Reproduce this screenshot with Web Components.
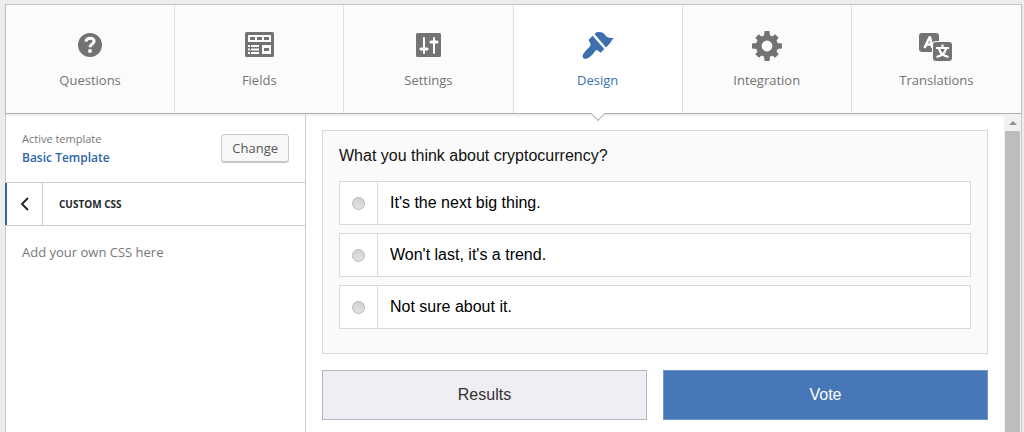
<!DOCTYPE html>
<html lang="en">
<head>
<meta charset="utf-8">
<meta name="viewport" content="width=device-width, initial-scale=1">
<title>Poll editor</title>
<style>
    body {
        margin: 0;
        background: #ededf0;
        font-family: "Open Sans", "Noto Sans", sans-serif;
        font-size: 13px;
        color: #777;
    }
</style>
</head>
<body>
<poll-editor>
    <editor-tab slot="tabs" icon="questions">Questions</editor-tab>
    <editor-tab slot="tabs" icon="fields">Fields</editor-tab>
    <editor-tab slot="tabs" icon="settings">Settings</editor-tab>
    <editor-tab slot="tabs" icon="design" active>Design</editor-tab>
    <editor-tab slot="tabs" icon="integration">Integration</editor-tab>
    <editor-tab slot="tabs" icon="translations">Translations</editor-tab>

    <design-sidebar slot="sidebar" template="Basic Template" section="Custom CSS">Add your own CSS here</design-sidebar>

    <poll-preview slot="preview" question="What you think about cryptocurrency?">
        <poll-option>It's the next big thing.</poll-option>
        <poll-option>Won't last, it's a trend.</poll-option>
        <poll-option>Not sure about it.</poll-option>
    </poll-preview>
</poll-editor>

<script>
// Tab icons, all on a 32x32 grid
const icons = {
    questions: `
        <circle cx="16" cy="16" r="12" fill="currentColor"/>
        <path d="M12 12.600c.3-4.600 8.200-4.400 8.100-.4 0 2.900-4 2.700-4 6" fill="none" stroke="#fff" stroke-width="3"/>
        <circle cx="16" cy="22" r="2" fill="#fff"/>`,
    fields: `
        <rect x="2" y="3" width="29" height="25" rx="1.500" fill="currentColor"/>
        <path fill="#fff" d="M5 6h23v7H5zM19 16h9v9h-9zM5 16h2v2H5zM8 16h8v2H8zM5 19.500h2v2H5zM8 19.500h8v2H8zM5 23h2v2H5zM8 23h8v2H8z"/>
        <path fill="currentColor" d="M7 8h5v3H7zM14 8h5v3h-5zM21 8h5v3h-5zM21 19h5v3h-5z"/>`,
    settings: `
        <rect x="4" y="4" width="25" height="24" rx="1.500" fill="currentColor"/>
        <path d="M12 9v15M22 9v15" stroke="#fff" stroke-width="2" stroke-linecap="round"/>
        <path d="M9 20h6M19 13h6" stroke="#fff" stroke-width="3" stroke-linecap="round"/>`,
    design: `
        <path fill="currentColor" d="M12.500 5C14 3.200 15.500 3 17 3c3.500 0 5 1.500 7 4 1.800 2.200 5 1.800 8 2.300-2 1.200-2.700 3.400-4 5-1.200 1.500-2.500 2.700-4 4.200z"/>
        <path fill="currentColor" d="M10.500 6.800L22.300 20l-3.800 3.800-3.200-2.800c-1.300 0-2 .9-3 2.300-2 2.800-4.500 5-7.300 6.300-3 1.200-5.300-1-4-4C2.500 22.500 5 20.500 7.500 18c1-1.200 1.400-2.500.8-3.800L6.500 11z"/>`,
    integration: `
        <g fill="currentColor">
            <path d="M13.500 2h5l.5 5h-6zM13.500 32h5l.5-5h-6z"/>
            <path d="M13.500 3h5l.5 5h-6zM13.500 31h5l.5-5h-6z" transform="rotate(45 16 17)"/>
            <path d="M13.500 2h5l.5 5h-6zM13.500 32h5l.5-5h-6z" transform="rotate(90 16 17)"/>
            <path d="M13.500 3h5l.5 5h-6zM13.500 31h5l.5-5h-6z" transform="rotate(135 16 17)"/>
        </g>
        <circle cx="16" cy="17" r="8.200" fill="#fff" stroke="currentColor" stroke-width="5.600"/>`,
    translations: `
        <rect x="-1" y="4" width="20" height="19" rx="3" fill="currentColor"/>
        <path d="M4.500 19L9.500 8.500h.5l2.500 10.500M6.500 15.500h6" fill="none" stroke="#fff" stroke-width="2.600"/>
        <rect x="12" y="12" width="20" height="20" rx="4" fill="#fbfbfb"/>
        <rect x="13" y="13" width="19" height="19" rx="3" fill="currentColor"/>
        <path d="M16 19h13M22.500 15.500V19M19 19.500c.8 4 4.500 7.500 9.500 8.500M26 19.500c-.8 4-4.500 7.500-9.500 8.500" fill="none" stroke="#fff" stroke-width="2.200"/>`
};

class PollEditor extends HTMLElement {
    constructor() {
        super();
        this.attachShadow({ mode: 'open' });
        this.shadowRoot.innerHTML = `
            <style>
                :host {
                    display: flex;
                    flex-direction: column;
                    box-sizing: border-box;
                    min-height: calc(100vh - 4px);
                    margin: 4px 2px 0 5px;
                    border: 1px solid #c8c8cc;
                    border-bottom: 0;
                    background: #fff;
                }
                .tabs {
                    display: grid;
                    grid-auto-flow: column;
                    grid-auto-columns: 1fr;
                    border-bottom: 1px solid #b0b0b0;
                    box-shadow: 0 1px 3px rgba(0, 0, 0, .12);
                }
                .body {
                    flex: 1;
                    display: grid;
                    grid-template-columns: 300px 1fr;
                }
            </style>
            <nav class="tabs"><slot name="tabs"></slot></nav>
            <div class="body">
                <slot name="sidebar"></slot>
                <slot name="preview"></slot>
            </div>
        `;
    }
}

class EditorTab extends HTMLElement {
    constructor() {
        super();
        this.attachShadow({ mode: 'open' });
    }

    connectedCallback() {
        this.shadowRoot.innerHTML = `
            <style>
                :host {
                    display: block;
                    position: relative;
                    border-right: 1px solid #e0e0e0;
                    background: #fbfbfb;
                    color: #737373;
                }
                :host(:last-of-type) {
                    border-right: 0;
                }
                :host([active]) {
                    background: #fff;
                    color: #3b6fae;
                }
                button {
                    display: flex;
                    flex-direction: column;
                    align-items: center;
                    gap: 8px;
                    width: 100%;
                    padding: 24px 0 22px;
                    border: 0;
                    background: none;
                    font: inherit;
                    line-height: 22px;
                    color: inherit;
                    cursor: pointer;
                }
                svg {
                    width: 32px;
                    height: 32px;
                    overflow: visible;
                }
                /* Pointer under the current tab */
                :host([active])::after {
                    content: "";
                    position: absolute;
                    left: 50%;
                    bottom: -6px;
                    width: 9px;
                    height: 9px;
                    margin-left: -5px;
                    border: solid #b0b0b0;
                    border-width: 0 1px 1px 0;
                    background: #fff;
                    transform: rotate(45deg);
                }
            </style>
            <button type="button">
                <svg viewBox="0 0 32 32" aria-hidden="true">${icons[this.getAttribute('icon')] || ''}</svg>
                <span><slot></slot></span>
            </button>
        `;
    }
}

class DesignSidebar extends HTMLElement {
    constructor() {
        super();
        this.attachShadow({ mode: 'open' });
        this.shadowRoot.innerHTML = `
            <style>
                :host {
                    display: block;
                    box-sizing: border-box;
                    border-right: 1px solid #ccc;
                }
                .template {
                    display: flex;
                    align-items: center;
                    justify-content: space-between;
                    padding: 15px 16px;
                }
                .template__label {
                    font-size: 11px;
                    line-height: 20px;
                }
                .template__name {
                    display: block;
                    font-size: 12px;
                    font-weight: 600;
                    line-height: 18px;
                    color: #2b66a5;
                }
                .template__change {
                    height: 28px;
                    padding: 0 10px;
                    border: 1px solid #c8c8c8;
                    border-radius: 3px;
                    background: #f8f8f8;
                    box-shadow: 0 1px 0 #ccc;
                    font: inherit;
                    color: #555;
                }
                .section {
                    display: flex;
                    align-items: stretch;
                    height: 42px;
                    border: solid #ccc;
                    border-width: 1px 0;
                    color: #23282d;
                }
                .section__back {
                    width: 38px;
                    padding: 0;
                    border: 0;
                    border-left: 2px solid #2b66a5;
                    border-right: 1px solid #ccc;
                    margin-left: -1px;
                    background: none;
                    color: inherit;
                }
                .section__back svg {
                    display: block;
                    margin: 0 auto;
                }
                h3 {
                    margin: 0 16px;
                    font-size: 10px;
                    font-weight: 700;
                    line-height: 42px;
                    text-transform: uppercase;
                }
                p {
                    margin: 16px;
                    line-height: 20px;
                }
            </style>
            <div class="template">
                <div>
                    <div class="template__label">Active template</div>
                    <strong class="template__name"></strong>
                </div>
                <button class="template__change" type="button">Change</button>
            </div>
            <div class="section">
                <button class="section__back" type="button" aria-label="Back">
                    <svg width="12" height="14" viewBox="0 0 12 14" aria-hidden="true">
                        <path d="M9 1L3 7l6 6" fill="none" stroke="currentColor" stroke-width="2"/>
                    </svg>
                </button>
                <h3></h3>
            </div>
            <p><slot></slot></p>
        `;
    }

    connectedCallback() {
        this.shadowRoot.querySelector('.template__name').textContent = this.getAttribute('template') || '';
        this.shadowRoot.querySelector('h3').textContent = this.getAttribute('section') || '';
    }
}

class PollPreview extends HTMLElement {
    constructor() {
        super();
        this.attachShadow({ mode: 'open' });
        this.shadowRoot.innerHTML = `
            <style>
                :host {
                    display: flex;
                    font-family: "Liberation Sans", Arial, sans-serif;
                    font-size: 16px;
                    color: #111;
                }
                form {
                    flex: 1;
                    padding: 16px 16px 12px;
                }
                fieldset {
                    display: flex;
                    flex-direction: column;
                    gap: 8px;
                    margin: 0 0 16px;
                    padding: 16px 16px 24px;
                    border: 1px solid #d9d9d9;
                    background: #fafafa;
                }
                .question {
                    margin: 0 0 8px;
                    line-height: 18px;
                }
                .actions {
                    display: grid;
                    grid-template-columns: 1fr 1fr;
                    gap: 16px;
                }
                .actions button {
                    height: 50px;
                    border: 1px solid #b4b5bc;
                    background: #eeeef4;
                    font: inherit;
                    color: #333;
                }
                .actions .vote {
                    border-color: #6f97c9;
                    background: #4777b6;
                    color: #fff;
                }
                .scrollbar {
                    display: flex;
                    flex-direction: column;
                    width: 15px;
                    padding: 0 1px;
                    background: #f1f1f1;
                }
                .scrollbar__up {
                    display: grid;
                    place-items: center;
                    height: 17px;
                }
                .scrollbar__thumb {
                    flex: 1;
                    background: #bdbdbd;
                }
            </style>
            <form>
                <fieldset aria-labelledby="question">
                    <p class="question" id="question"></p>
                    <slot></slot>
                </fieldset>
                <div class="actions">
                    <button type="button">Results</button>
                    <button class="vote" type="button">Vote</button>
                </div>
            </form>
            <div class="scrollbar" aria-hidden="true">
                <div class="scrollbar__up">
                    <svg width="8" height="4" viewBox="0 0 8 4"><path d="M0 4l4-4 4 4z" fill="#8f8f8f"/></svg>
                </div>
                <div class="scrollbar__thumb"></div>
            </div>
        `;
    }

    connectedCallback() {
        this.shadowRoot.querySelector('.question').textContent = this.getAttribute('question') || '';
    }
}

class PollOption extends HTMLElement {
    constructor() {
        super();
        this.attachShadow({ mode: 'open' });
        this.shadowRoot.innerHTML = `
            <style>
                :host {
                    display: block;
                    border: 1px solid #d9d9d9;
                    background: #fff;
                }
                label {
                    display: flex;
                    height: 42px;
                    line-height: 42px;
                    color: #000;
                }
                .radio {
                    display: grid;
                    place-items: center;
                    width: 37px;
                    border-right: 1px solid #d9d9d9;
                }
                input {
                    appearance: none;
                    width: 13px;
                    height: 13px;
                    margin: 0;
                    border: 1px solid #b8b8b8;
                    border-radius: 50%;
                    background: linear-gradient(#d2d2d2, #e2e2e2);
                }
                input:checked {
                    background: #4777b6;
                }
                .text {
                    padding: 0 12px;
                }
            </style>
            <label>
                <span class="radio"><input type="radio" name="answer"></span>
                <span class="text"><slot></slot></span>
            </label>
        `;
    }
}

customElements.define('poll-editor', PollEditor);
customElements.define('editor-tab', EditorTab);
customElements.define('design-sidebar', DesignSidebar);
customElements.define('poll-preview', PollPreview);
customElements.define('poll-option', PollOption);
</script>
</body>
</html>
